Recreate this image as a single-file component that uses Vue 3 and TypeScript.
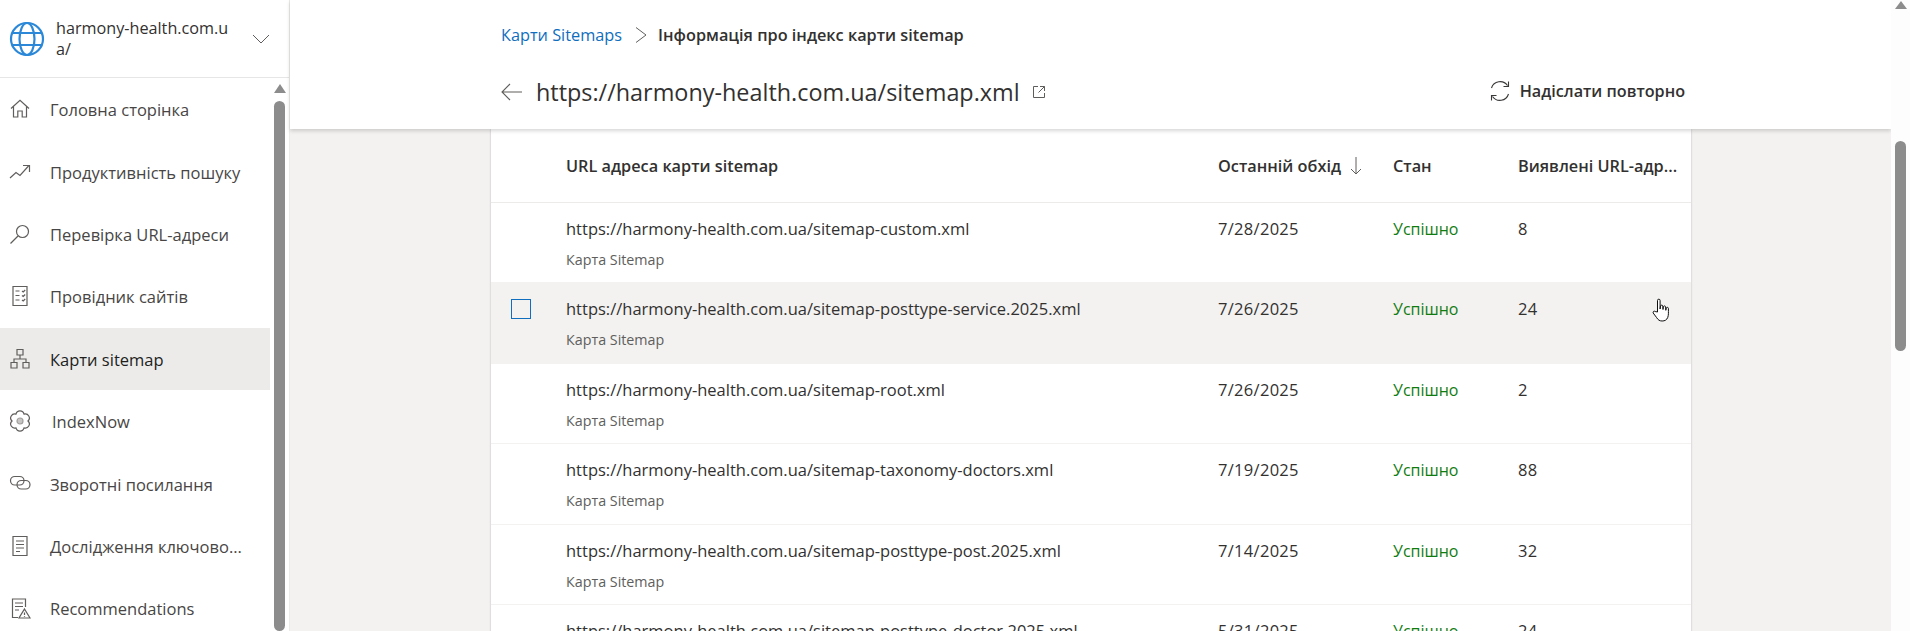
<script setup lang="ts">
type NavItem = { label: string; icon: string; active?: boolean; nudge?: boolean };
type Row = { url: string; date: string; count: string; hover?: boolean };

const navItems: NavItem[] = [
  { label: 'Головна сторінка', icon: 'home' },
  { label: 'Продуктивність пошуку', icon: 'trend' },
  { label: 'Перевірка URL-адреси', icon: 'search' },
  { label: 'Провідник сайтів', icon: 'explorer' },
  { label: 'Карти sitemap', icon: 'sitemap', active: true },
  { label: 'IndexNow', icon: 'gear', nudge: true },
  { label: 'Зворотні посилання', icon: 'link' },
  { label: 'Дослідження ключово...', icon: 'doc' },
  { label: 'Recommendations', icon: 'rec' },
];

const rows: Row[] = [
  { url: 'https://harmony-health.com.ua/sitemap-custom.xml', date: '7/28/2025', count: '8' },
  { url: 'https://harmony-health.com.ua/sitemap-posttype-service.2025.xml', date: '7/26/2025', count: '24', hover: true },
  { url: 'https://harmony-health.com.ua/sitemap-root.xml', date: '7/26/2025', count: '2' },
  { url: 'https://harmony-health.com.ua/sitemap-taxonomy-doctors.xml', date: '7/19/2025', count: '88' },
  { url: 'https://harmony-health.com.ua/sitemap-posttype-post.2025.xml', date: '7/14/2025', count: '32' },
  { url: 'https://harmony-health.com.ua/sitemap-posttype-doctor.2025.xml', date: '5/31/2025', count: '24' },
];
</script>

<template>
  <div class="app">
    <aside class="sidebar">
      <div class="site">
        <svg class="globe" width="36" height="36" viewBox="0 0 36 36" fill="none" stroke="#2b88d8" stroke-width="2.2">
          <circle cx="18" cy="18" r="16" />
          <ellipse cx="18" cy="18" rx="7.5" ry="16" />
          <path d="M3.5 12h29M3.5 24h29" />
        </svg>
        <div class="site-name">harmony-health.com.ua/</div>
        <svg class="chev" width="18" height="10" viewBox="0 0 18 10" fill="none" stroke="#605e5c" stroke-width="1">
          <path d="M1 1l8 8 8-8" />
        </svg>
      </div>
      <div class="nav-area">
        <nav class="nav">
          <a v-for="item in navItems" :key="item.label" class="nav-item" :class="{ active: item.active }">
            <svg class="nav-icon" width="22" height="22" viewBox="0 0 22 22" fill="none" stroke="#605e5c" stroke-width="1.2">
              <template v-if="item.icon === 'home'">
                <path d="M2 10.500L11 2.200l9 8.300M4.500 8.500v10.500h4.300v-6h4.400v6h4.300V8.500" />
              </template>
              <template v-else-if="item.icon === 'trend'">
                <path d="M1 17l6-5.500 4 3 8.500-9.500M14 4.500h6.500V11" />
              </template>
              <template v-else-if="item.icon === 'search'">
                <circle cx="13.500" cy="8.500" r="6" />
                <path d="M9 13L1.500 20.500" />
              </template>
              <template v-else-if="item.icon === 'explorer'">
                <path d="M4 1.500h14v19H4zM6.500 6h4M6.500 10.500h4M6.500 15h4M13 6l1.200 1 2-2M13 10.500l1.200 1 2-2M13 15l1.200 1 2-2" />
              </template>
              <template v-else-if="item.icon === 'sitemap'">
                <path d="M8 1.500h6V7H8zM2 14.500h6V20H2zM14 14.500h6V20h-6zM11 7v4M5 14.500V11h12v3.500" />
              </template>
              <template v-else-if="item.icon === 'gear'">
                <path d="M7 4.070A4.100 4.100 0 0 1 15 4.070A4.100 4.100 0 0 1 19 11A4.100 4.100 0 0 1 15 17.930A4.100 4.100 0 0 1 7 17.930A4.100 4.100 0 0 1 3 11A4.100 4.100 0 0 1 7 4.070z" />
                <circle cx="11" cy="11" r="3" fill="#c8c6c4" stroke="#a19f9d" />
              </template>
              <template v-else-if="item.icon === 'link'">
                <rect x="1.500" y="3.500" width="13.500" height="8.500" rx="4.250" />
                <rect x="8" y="7.500" width="13" height="8.500" rx="4.250" />
              </template>
              <template v-else-if="item.icon === 'doc'">
                <path d="M4 1.500h14v19H4zM7 6h8M7 9.500h8M7 13h8M7 16.500h4" />
              </template>
              <template v-else-if="item.icon === 'rec'">
                <path d="M9 20.500H3.500V2h13v8M6 6h8M6 9.500h8M6 13h4M15.500 12l5.500 9H10zM15.500 15.500v2.500M15.500 19v.8" />
              </template>
            </svg>
            <span class="nav-label" :class="{ nudged: item.nudge }">{{ item.label }}</span>
          </a>
        </nav>
        <div class="nav-scroll">
          <span class="nav-arrow"></span>
          <span class="nav-thumb"></span>
        </div>
      </div>
    </aside>

    <main class="main">
      <header class="topbar">
        <div class="crumbs">
          <a class="crumb-link">Карти Sitemaps</a>
          <svg width="12" height="16" viewBox="0 0 12 16" fill="none" stroke="#605e5c" stroke-width="1"><path d="M1 .500l10 7.500-10 7.500" /></svg>
          <span class="crumb-current">Інформація про індекс карти sitemap</span>
        </div>
        <div class="title-row">
          <svg class="back" width="22" height="18" viewBox="0 0 22 18" fill="none" stroke="#605e5c" stroke-width="1.1"><path d="M21 9H1M9 1L1 9l8 8" /></svg>
          <h1 class="title">https://harmony-health.com.ua/sitemap.xml</h1>
          <svg class="ext" width="14" height="14" viewBox="0 0 14 14" fill="none" stroke="#605e5c" stroke-width="1"><path d="M6 1.500H1.500v11h11V8M8 1.500h4.500V6M12.500 1.500L6.500 7.500" /></svg>
          <button class="resend">
            <svg width="22" height="22" viewBox="0 0 22 22" fill="none" stroke="#3b3a39" stroke-width="1.1">
              <path d="M2.500 8A9 9 0 0 1 18.500 5.500M19.500 1.500V6.500H14.500M19.500 14A9 9 0 0 1 3.500 16.500M2.500 20.500V15.500H7.500" />
            </svg>
            <span>Надіслати повторно</span>
          </button>
        </div>
      </header>

      <section class="content">
        <div class="table">
          <div class="thead row-grid">
            <span></span>
            <span>URL адреса карти sitemap</span>
            <span class="sort">Останній обхід
              <svg width="12" height="20" viewBox="0 0 12 20" fill="none" stroke="#605e5c" stroke-width="1"><path d="M6 1v17M1 13l5 5 5-5" /></svg>
            </span>
            <span>Стан</span>
            <span class="ellip">Виявлені URL-адр...</span>
          </div>
          <div v-for="r in rows" :key="r.url" class="trow row-grid" :class="{ hovered: r.hover }">
            <span class="check-cell"><i v-if="r.hover" class="check"></i></span>
            <div>
              <div class="url">{{ r.url }}</div>
              <div class="type">Карта Sitemap</div>
            </div>
            <span class="cell num">{{ r.date }}</span>
            <span class="cell ok">Успішно</span>
            <span class="cell num">{{ r.count }}</span>
          </div>
        </div>
        <svg class="cursor" width="18" height="26" viewBox="0 0 18 26" fill="#fff" stroke="#111" stroke-width="1">
          <path d="M5.500 14V2.500a1.300 1.300 0 0 1 2.600 0V11l.4-3a1.200 1.200 0 0 1 2.300 0l.2 3.500.4-3a1.200 1.200 0 0 1 2.200.3l.2 3.500.5-2.300a1.100 1.100 0 0 1 2.100.3c0 5 .2 6.500-.6 9-1 2.700-3 3.700-5.700 3.700-2.500 0-4-1-5.400-3.300L1.200 15c-.6-1.200.8-2.500 2-1.500z" />
        </svg>
      </section>
    </main>

    <div class="page-scroll">
      <span class="page-arrow"></span>
      <span class="page-thumb"></span>
    </div>
  </div>
</template>

<style>
html, body { margin: 0; overflow: hidden; background: #fff; }
</style>

<style scoped>
.app {
  width: 1910px;
  height: 631px;
  display: flex;
  overflow: hidden;
  font-family: "Open Sans", "Noto Sans", sans-serif;
  color: #323130;
  background: #fff;
}
.sidebar {
  width: 290px;
  box-sizing: border-box;
  flex: none;
  border-right: 1px solid #edebe9;
  display: flex;
  flex-direction: column;
  overflow: hidden;
}
.site {
  height: 78px;
  flex: none;
  box-sizing: border-box;
  border-bottom: 1px solid #e6e6e6;
  display: flex;
  align-items: center;
  padding-left: 9px;
}
.globe { flex: none; }
.site-name {
  width: 178px;
  margin-left: 11px;
  font-size: 16.2px;
  line-height: 21px;
  word-break: break-all;
  color: #323130;
}
.chev { margin-left: 18px; flex: none; }
.nav-area { flex: 1; display: flex; min-height: 0; }
.nav { width: 270px; flex: none; }
.nav-item {
  height: 62.4px;
  display: flex;
  align-items: center;
  padding-left: 9px;
  font-size: 16.5px;
  color: #484644;
  box-sizing: border-box;
}
.nav-item.active { background: #edebe9; color: #201f1e; }
.nav-icon { flex: none; }
.nav-label { margin: 1px 0 0 19px; white-space: nowrap; }
.nav-label.nudged { margin-left: 21px; }
.nav-scroll { flex: 1; display: flex; flex-direction: column; align-items: center; }
.nav-arrow {
  margin-top: 6px;
  width: 0;
  height: 0;
  border-left: 6.5px solid transparent;
  border-right: 6.5px solid transparent;
  border-bottom: 9px solid #8c8c8c;
}
.nav-thumb {
  margin-top: 8px;
  width: 11px;
  flex: 1;
  background: #8c8c8c;
  border-radius: 6px;
}
.main {
  flex: 1;
  min-width: 0;
  display: flex;
  flex-direction: column;
  background: #f3f2f1;
}
.topbar {
  height: 129px;
  flex: none;
  box-sizing: border-box;
  background: #fff;
  box-shadow: 0 2px 4px rgba(0, 0, 0, 0.16);
  position: relative;
  z-index: 2;
  padding: 24px 0 0 211px;
}
.crumbs { display: flex; align-items: center; height: 22px; font-size: 16.3px; }
.crumb-link { color: #106ebe; }
.crumbs svg { margin: 0 11px 0 13px; }
.crumb-current { font-weight: 600; color: #323130; }
.title-row { display: flex; align-items: center; margin-top: 24px; height: 44px; }
.back { flex: none; }
.title { margin: 0 0 0 13px; font-size: 23.4px; font-weight: 400; color: #323130; white-space: nowrap; }
.ext { margin-left: 12px; flex: none; }
.resend {
  margin: 0 0 2px 443px;
  display: flex;
  align-items: center;
  gap: 9px;
  border: 0;
  background: none;
  padding: 0;
  font: 600 16.2px "Open Sans", sans-serif;
  color: #323130;
  white-space: nowrap;
}
.content { flex: 1; min-height: 0; overflow: hidden; position: relative; padding-left: 201px; }
.table {
  width: 1200px;
  background: #fff;
  box-shadow: 0 0 2px rgba(0, 0, 0, 0.25);
}
.row-grid {
  display: grid;
  grid-template-columns: 75px 652px 175px 125px 1fr;
  box-sizing: border-box;
}
.thead {
  height: 74px;
  padding-top: 1px;
  align-items: center;
  font-size: 16.3px;
  font-weight: 600;
  border-bottom: 1px solid #edebe9;
  white-space: nowrap;
}
.sort { display: flex; align-items: center; gap: 9px; }
.trow {
  height: 80.4px;
  border-bottom: 1px solid #f3f2f1;
  padding-top: 14px;
}
.trow.hovered { background: #f3f2f1; }
.check-cell { display: flex; padding: 2px 0 0 20px; }
.check { width: 20px; height: 20px; box-sizing: border-box; border: 1.500px solid #106ebe; display: block; }
.url { font-size: 16.5px; line-height: 24px; color: #323130; white-space: nowrap; }
.type { font-size: 14.3px; line-height: 18px; margin-top: 10px; color: #605e5c; }
.cell { font-size: 16px; line-height: 24px; color: #323130; }
.cell.num { font-size: 16.5px; letter-spacing: 0.3px; }
.cell.ok { color: #107c10; }
.cursor { position: absolute; left: 1362px; top: 169px; }
.page-scroll {
  width: 19px;
  flex: none;
  background: #fdfdfd;
  display: flex;
  flex-direction: column;
  align-items: center;
  position: relative;
  z-index: 3;
}
.page-arrow {
  margin-top: 1px;
  width: 0;
  height: 0;
  border-left: 6.5px solid transparent;
  border-right: 6.5px solid transparent;
  border-bottom: 8px solid #8c8c8c;
}
.page-thumb {
  margin-top: 132px;
  width: 11px;
  height: 210px;
  background: #8c8c8c;
  border-radius: 6px;
}
</style>
